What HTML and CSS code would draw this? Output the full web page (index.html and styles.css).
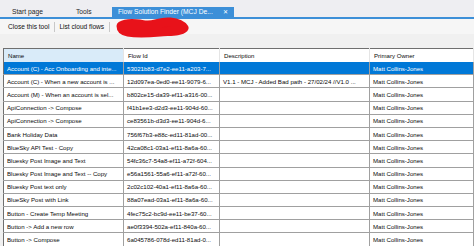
FILE: index.html
```html
<!DOCTYPE html>
<html lang="en">
<head>
  <meta charset="UTF-8">
  <title>Flow Solution Finder</title>
  <link rel="stylesheet" href="styles.css">
</head>
<body>

  <div class="tabs">
    <div class="tab tab-start">Start page</div>
    <div class="tab tab-tools">Tools</div>
    <div class="tab active">
      <span>Flow Solution Finder (MCJ De...</span>
      <span class="close">✕</span>
    </div>
  </div>

  <div class="toolbar">
    <span class="tool">Close this tool</span>
    <span class="sep"></span>
    <span class="tool">List cloud flows</span>
    <span class="sep"></span>
  </div>

  <!-- redaction scribble -->
  <svg class="scribble" width="76" height="22" viewBox="0 0 76 22">
    <path d="M7 10 C14 6, 24 8, 32 9 C40 10, 46 5, 56 6 C64 7, 68 9, 70 12 C66 16, 54 15, 46 16 C36 17, 24 18, 14 16 C8 15, 7 13, 7 10 Z"
          fill="#e8121a" stroke="#e8121a" stroke-width="9" stroke-linejoin="round"/>
  </svg>

  <div class="grid-area">
    <table class="grid">
      <colgroup>
        <col class="c-name">
        <col class="c-id">
        <col class="c-desc">
        <col>
      </colgroup>
      <thead>
        <tr>
          <th class="sorted">Name</th>
          <th>Flow Id</th>
          <th>Description</th>
          <th>Primary Owner</th>
        </tr>
      </thead>
      <tbody id="rows"></tbody>
    </table>
  </div>

  <script>
    const flows = [
      ["Account (C) - Acc Onboarding and inte...", "53021b83-d7e2-ee11-a203-7...", ""],
      ["Account (C) - When a new account is ...", "12d097ea-0ed0-ee11-9079-6...", "V1.1 - MCJ - Added Bad path - 27/02/24 //V1.0 ..."],
      ["Account (M) - When an account is sel...", "b802ce15-da39-ef11-a316-00...", ""],
      ["ApiConnection -> Compose", "f41b1ee3-d2d3-ee11-904d-60...", ""],
      ["ApiConnection -> Compose", "ce83561b-d3d3-ee11-904d-6...", ""],
      ["Bank Holiday Data", "756f67b3-e88c-ed11-81ad-00...", ""],
      ["BlueSky API Test - Copy", "42ca08c1-03a1-ef11-8a6a-60...", ""],
      ["Bluesky Post Image and Text", "54fc36c7-54a8-ef11-a72f-604...", ""],
      ["Bluesky Post Image and Text -- Copy", "e56a1561-55a6-ef11-a72f-60...", ""],
      ["Bluesky Post text only", "2c02c102-40a1-ef11-8a6a-60...", ""],
      ["BlueSky Post with Link", "88a07ead-03a1-ef11-8a6a-60...", ""],
      ["Button - Create Temp Meeting", "4fec75c2-bc9d-ee11-be37-60...", ""],
      ["Button -> Add a new row", "ae0f3394-502a-ef11-840a-60...", ""],
      ["Button -> Compose", "6a045786-078d-ed11-81ad-0...", ""]
    ];

    const tbody = document.getElementById('rows');
    flows.forEach((f, i) => {
      const tr = document.createElement('tr');
      if (i === 0) tr.className = 'selected';
      [f[0], f[1], f[2], 'Matt Collins-Jones'].forEach(text => {
        const td = document.createElement('td');
        td.textContent = text;
        tr.appendChild(td);
      });
      tbody.appendChild(tr);
    });
  </script>

</body>
</html>
```

FILE: styles.css
```css
body {
  margin: 0;
  width: 474px;
  height: 246px;
  overflow: hidden;
  background: #f0f0f0;
  font-family: 'Liberation Sans', Arial, sans-serif;
  color: #1e1e1e;
  position: relative;
}

/* Tab strip */
.tabs {
  display: flex;
  align-items: flex-end;
  height: 17px;
  background: #eeeef2;
  border-bottom: 2px solid #3c8fd8;
}

.tab {
  height: 10px;
  line-height: 10px;
  font-size: 6.7px;
  white-space: nowrap;
}

.tab-start {
  width: 62px;
  padding-left: 12px;
  box-sizing: border-box;
}

.tab-tools {
  width: 50px;
  padding-left: 14px;
  box-sizing: border-box;
}

.tab.active {
  width: 122px;
  box-sizing: border-box;
  padding: 0 6px;
  background: #3c8fd8;
  color: #fff;
  display: flex;
  justify-content: space-between;
}

.close {
  font-size: 6px;
}

/* Toolbar */
.toolbar {
  display: flex;
  align-items: center;
  height: 15px;
  padding-left: 8px;
  background: #f6f6f6;
  font-size: 6.6px;
  color: #111;
}

.sep {
  width: 1px;
  height: 10px;
  background: #c8c8c8;
  margin: 0 4px 0 5px;
}

.scribble {
  position: absolute;
  left: 114px;
  top: 16px;
}

/* Grid */
.grid-area {
  padding: 14px 0 0 3px;
}

.grid {
  border-collapse: collapse;
  table-layout: fixed;
  width: 471px;
  background: #fff;
  border-left: 1px solid #6f6f6f;
  border-top: 1px solid #6f6f6f;
  font-size: 6.1px;
  color: #0a0a0a;
}

.c-name { width: 120px; }
.c-id { width: 96px; }
.c-desc { width: 150px; }

.grid th {
  height: 13px;
  padding: 0 0 0 4px;
  text-align: left;
  font-weight: normal;
  background: #fff;
  border-right: 1px solid #e5e5e5;
  white-space: nowrap;
  overflow: hidden;
}

.grid th.sorted {
  background: #d9ebf9;
}

.grid td {
  height: 12.2px;
  padding: 0 0 0 3px;
  border-right: 1px solid #a0a0a0;
  border-bottom: 1px solid #a0a0a0;
  white-space: nowrap;
  overflow: hidden;
}

.grid tr.selected td {
  background: #0078d7;
  color: #fff;
}
```
